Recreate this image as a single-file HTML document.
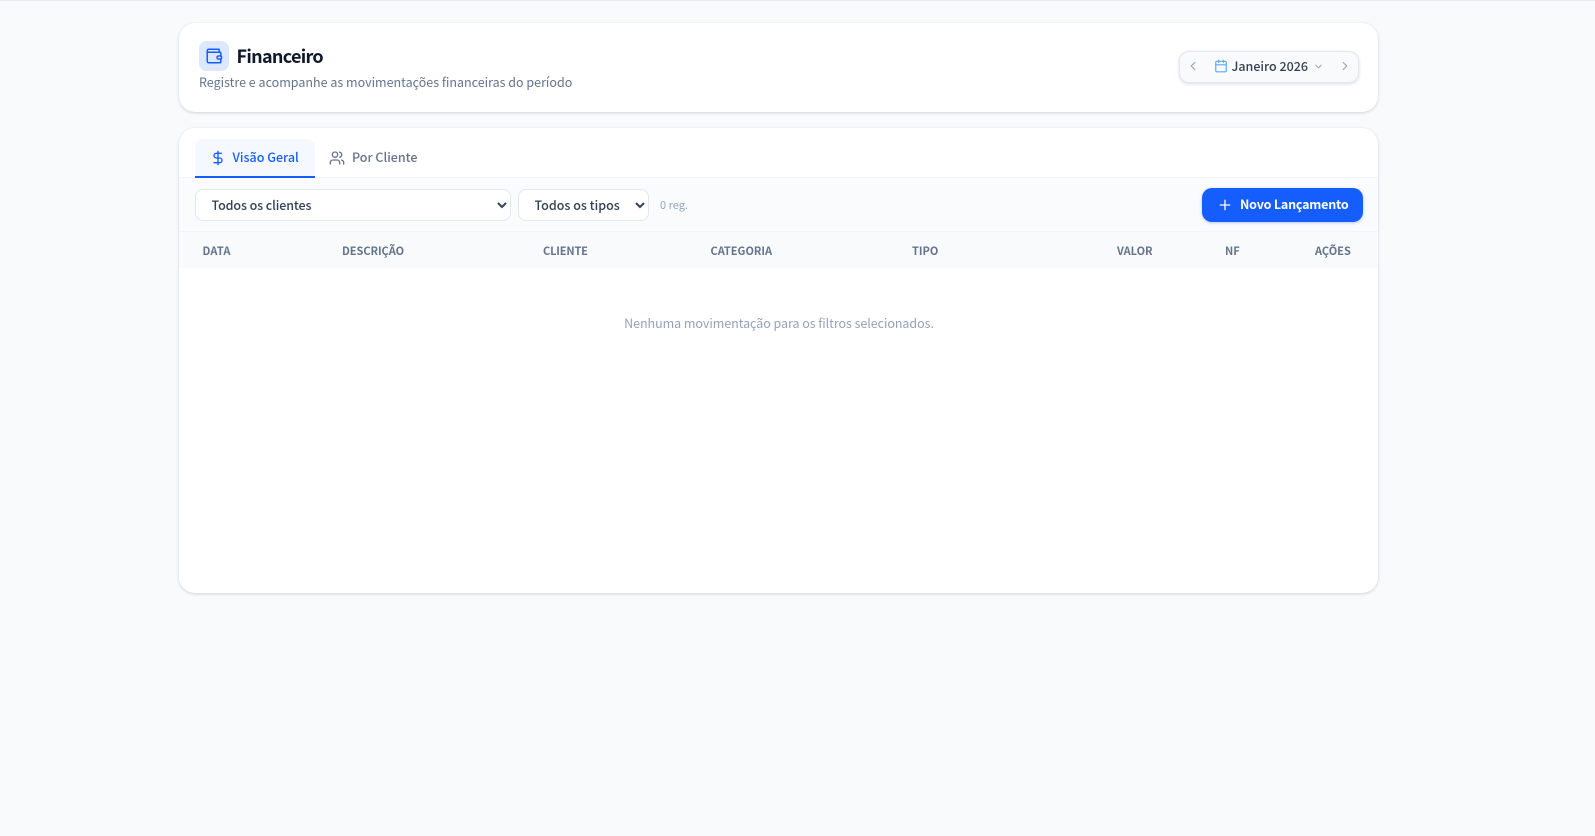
<!DOCTYPE html>
<html lang="pt-BR">
<head>
<meta charset="utf-8">
<title>Financeiro</title>
<style>
html,body{margin:0;padding:0;width:1595px;height:836px;overflow:hidden;background:#f8fafc;}
body{position:relative;font-family:"Noto Sans CJK JP","Liberation Sans",sans-serif;}
.a{position:absolute;white-space:nowrap;}
.t{line-height:20px;height:20px;}
svg{position:absolute;display:block;fill:none;stroke-linecap:round;stroke-linejoin:round;}
.card{position:absolute;left:179px;width:1199px;background:#fff;border-radius:16px;box-shadow:0 1px 3px rgba(15,23,42,.16),0 0 1px rgba(15,23,42,.06);}
select{position:absolute;box-sizing:border-box;height:32px;top:189px;background:#fff;border:1px solid #e2e8f0;border-radius:8px;font-family:inherit;font-size:12.5px;font-weight:500;color:#334155;padding:0 11.5px 1px;outline:none;}
.th{top:241px;font-size:11px;font-weight:700;color:#64748b;}
</style>
</head>
<body>
<div class="a" style="left:0;top:0;width:1595px;height:1px;background:#e8ecf1"></div>

<div class="card" style="top:23px;height:88.5px"></div>
<div class="a" style="left:199px;top:41px;width:30px;height:30px;border-radius:8px;background:#dbe8fe"></div>
<svg style="left:205px;top:47px" width="18" height="18" viewBox="0 0 24 24" stroke="#155dfc" stroke-width="2"><path d="M19 7V4a1 1 0 0 0-1-1H5a2 2 0 0 0 0 4h15a1 1 0 0 1 1 1v4h-3a2 2 0 0 0 0 4h3a1 1 0 0 0 1-1v-2a1 1 0 0 0-1-1"/><path d="M3 5v14a2 2 0 0 0 2 2h15a1 1 0 0 0 1-1v-4"/></svg>
<div class="a t" style="left:236.5px;top:46px;font-size:18px;font-weight:700;color:#0f172a;letter-spacing:-.7px">Financeiro</div>
<div class="a t" style="left:199px;top:72px;font-size:12.5px;color:#64748b">Registre e acompanhe as movimentações financeiras do período</div>

<div class="a" style="left:1179px;top:51px;box-sizing:border-box;width:179.5px;height:31.5px;background:#f8fafc;border:1px solid #e2e8f0;border-radius:10px;box-shadow:0 1px 3px rgba(15,23,42,.14)"></div>
<svg style="left:1186px;top:59px" width="14" height="14" viewBox="0 0 24 24" stroke="#94a3b8" stroke-width="2"><path d="m15 18-6-6 6-6"/></svg>
<svg style="left:1214px;top:59px" width="14" height="14" viewBox="0 0 24 24" stroke="#60a5fa" stroke-width="2"><path d="M8 2v4"/><path d="M16 2v4"/><rect x="3" y="4" width="18" height="18" rx="2"/><path d="M3 10h18"/></svg>
<div class="a t" style="left:1231.5px;top:56px;font-size:12.5px;font-weight:500;color:#334155">Janeiro 2026</div>
<svg style="left:1313px;top:61px" width="11" height="11" viewBox="0 0 24 24" stroke="#94a3b8" stroke-width="2"><path d="m6 9 6 6 6-6"/></svg>
<svg style="left:1338px;top:59px" width="14" height="14" viewBox="0 0 24 24" stroke="#94a3b8" stroke-width="2"><path d="m9 18 6-6-6-6"/></svg>

<div class="card" style="top:128px;height:465px"></div>
<div class="a" style="left:179px;top:177px;width:1199px;height:1px;background:#f1f5f9"></div>
<div class="a" style="left:179px;top:178px;width:1199px;height:53px;background:#fafbfd"></div>
<div class="a" style="left:179px;top:231px;width:1199px;height:1px;background:#f1f5f9"></div>
<div class="a" style="left:179px;top:232px;width:1199px;height:36px;background:#f8fafc"></div>

<div class="a" style="left:195px;top:139px;width:120px;height:39px;box-sizing:border-box;background:#f5f8ff;border-bottom:2px solid #155dfc;border-radius:8px 8px 0 0"></div>
<svg style="left:209.5px;top:150px" width="16" height="16" viewBox="0 0 24 24" stroke="#155dfc" stroke-width="2"><path d="M12 2v20"/><path d="M17 5H9.5a3.5 3.5 0 0 0 0 7h5a3.5 3.5 0 0 1 0 7H6"/></svg>
<div class="a t" style="left:232.5px;top:147px;font-size:12.5px;font-weight:500;color:#155dfc">Visão Geral</div>
<svg style="left:329px;top:149.5px" width="16" height="16" viewBox="0 0 24 24" stroke="#64748b" stroke-width="2"><path d="M16 21v-2a4 4 0 0 0-4-4H6a4 4 0 0 0-4 4v2"/><circle cx="9" cy="7" r="4"/><path d="M22 21v-2a4 4 0 0 0-3-3.87"/><path d="M16 3.13a4 4 0 0 1 0 7.75"/></svg>
<div class="a t" style="left:352px;top:147px;font-size:12.5px;font-weight:500;color:#64748b">Por Cliente</div>

<select style="left:195px;width:316px;letter-spacing:-.1px"><option>Todos os clientes</option></select>
<select style="left:518px;width:131px"><option>Todos os tipos</option></select>
<div class="a t" style="left:660px;top:195px;font-size:11px;color:#94a3b8">0 reg.</div>

<div class="a" style="left:1202px;top:188px;width:161px;height:34px;background:#155dfc;border-radius:10px;box-shadow:0 1px 3px rgba(21,93,252,.3)"></div>
<svg style="left:1217px;top:196.5px" width="16" height="16" viewBox="0 0 24 24" stroke="#fff" stroke-width="2"><path d="M5 12h14"/><path d="M12 5v14"/></svg>
<div class="a t" style="left:1240px;top:194px;font-size:12.5px;font-weight:700;color:#fff;letter-spacing:-.2px">Novo Lançamento</div>

<div class="a t th" style="left:202.5px;letter-spacing:.2px">DATA</div>
<div class="a t th" style="left:342px;letter-spacing:-.05px">DESCRIÇÃO</div>
<div class="a t th" style="left:543px;letter-spacing:-.15px">CLIENTE</div>
<div class="a t th" style="left:710.5px">CATEGORIA</div>
<div class="a t th" style="left:912px">TIPO</div>
<div class="a t th" style="left:1117px">VALOR</div>
<div class="a t th" style="left:1225px">NF</div>
<div class="a t th" style="left:1315px">AÇÕES</div>

<div class="a t" style="left:179.5px;width:1199px;top:313px;text-align:center;font-size:12.5px;letter-spacing:-.05px;color:#94a3b8">Nenhuma movimentação para os filtros selecionados.</div>
</body>
</html>
